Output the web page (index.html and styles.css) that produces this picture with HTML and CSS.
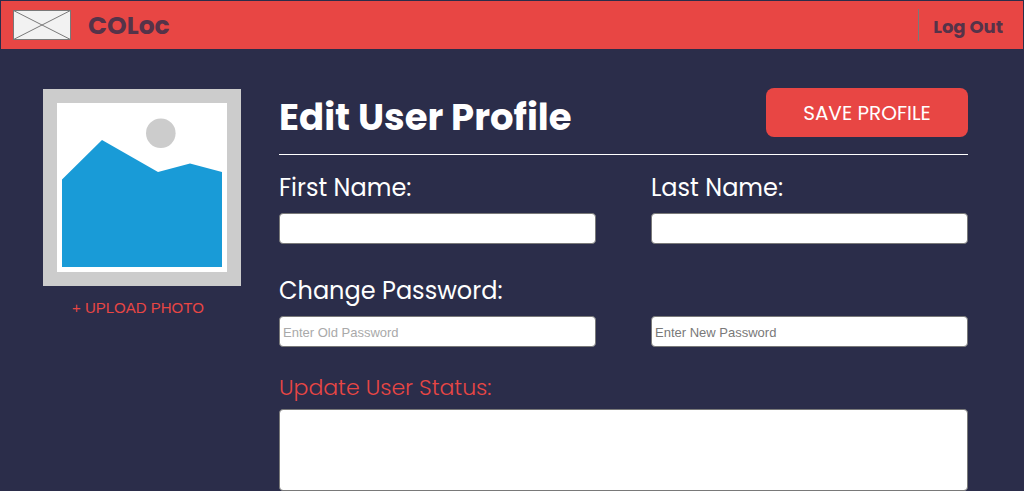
FILE: index.html
```html
<!DOCTYPE html>
<html lang="en">
<head>
<meta charset="utf-8">
<meta name="viewport" content="width=device-width, initial-scale=1">
<title>COLoc - Edit User Profile</title>
<link rel="stylesheet" href="styles.css">
</head>
<body>
<header class="topbar">
  <a class="brand" href="#">
    <svg class="brand-logo" viewBox="0 0 58 30" aria-hidden="true">
      <rect x="0.5" y="0.5" width="57" height="29" fill="#f2f2f2" stroke="#797979"/>
      <path d="M0.5 0.5L57.5 29.5M57.5 0.5L0.5 29.5" fill="none" stroke="#797979"/>
    </svg>
    <span class="brand-name">COLoc</span>
  </a>
  <a class="logout" href="#">Log Out</a>
</header>
<main class="page">
  <aside class="photo">
    <svg class="photo-image" viewBox="0 0 198 197" role="img" aria-label="Profile photo">
      <rect width="198" height="197" fill="#ccc"/>
      <rect x="14" y="14" width="170" height="169" fill="#fff"/>
      <circle cx="117.800" cy="44.300" r="14.800" fill="#ccc"/>
      <path d="M19 90.500L59 51l56 32 32-8.500L179 83v95H19z" fill="#199bd7"/>
    </svg>
    <button class="upload" type="button">+ UPLOAD PHOTO</button>
  </aside>
  <form class="profile">
    <div class="profile-head">
      <h1 class="title">Edit User Profile</h1>
      <button class="save" type="button">SAVE PROFILE</button>
    </div>
    <div class="fields">
      <div class="field">
        <label class="label" for="first">First Name:</label>
        <input class="input" id="first" type="text">
      </div>
      <div class="field">
        <label class="label" for="last">Last Name:</label>
        <input class="input" id="last" type="text">
      </div>
      <div class="field">
        <label class="label" for="old">Change Password:</label>
        <input class="input input-muted" id="old" type="password" placeholder="Enter Old Password">
      </div>
      <div class="field">
        <input class="input" id="new" type="password" placeholder="Enter New Password" aria-label="New password">
      </div>
    </div>
    <div class="field">
      <label class="label label-status" for="status">Update User Status:</label>
      <textarea class="input status" id="status"></textarea>
    </div>
  </form>
</main>
</body>
</html>
```
FILE: styles.css
```css
* {
  box-sizing: border-box;
}

body {
  margin: 0;
  background: #2b2d4a;
  color: #fff;
  font-family: Poppins, Inter, "Liberation Sans", sans-serif;
}

.topbar {
  display: flex;
  align-items: center;
  justify-content: space-between;
  height: 50px;
  padding: 0 20px 0 12px;
  border: 1px solid #2b2d4a;
  background: #e84644;
}

.brand {
  display: flex;
  align-items: center;
  gap: 17px;
  color: #553349;
  font-size: 25px;
  font-weight: 700;
  line-height: 34px;
  text-decoration: none;
}

.brand-name {
  padding-top: 2px;
}

.brand-logo {
  width: 58px;
  height: 30px;
}

.logout {
  padding: 3px 0 0 14px;
  border-left: 1px solid #797979;
  color: #553349;
  font-size: 18px;
  font-weight: 700;
  line-height: 29px;
  text-decoration: none;
}

.page {
  display: grid;
  grid-template-columns: 198px 1fr;
  column-gap: 38px;
  padding: 38px 56px 0 43px;
}

.photo {
  padding-top: 1px;
}

.photo-image {
  display: block;
  width: 100%;
}

.upload {
  display: block;
  margin: 12px 0 0 29px;
  padding: 0;
  border: 0;
  background: none;
  color: #e84644;
  font: 15px/20px "Liberation Sans", sans-serif;
}

.profile-head {
  display: flex;
  align-items: flex-start;
  justify-content: space-between;
  padding-bottom: 8px;
  border-bottom: 1px solid #fff;
}

.title {
  margin: 0;
  font-size: 37px;
  font-weight: 700;
  line-height: 58px;
}

.save {
  width: 202px;
  height: 49px;
  padding: 0;
  border: 0;
  border-radius: 8px;
  background: #e84644;
  color: #fff;
  font-family: inherit;
  font-size: 20px;
}

.fields {
  display: grid;
  grid-template-columns: 1fr 1fr;
  gap: 26px 55px;
  padding: 12px 0 20px;
}

.field {
  display: flex;
  flex-direction: column;
  justify-content: flex-end;
}

.label {
  margin-bottom: 5px;
  font-size: 24px;
  line-height: 41px;
}

.label-status {
  margin-bottom: 0;
  color: #e84644;
  font-size: 22px;
  font-weight: 300;
  line-height: 42px;
}

.input {
  width: 100%;
  height: 31px;
  padding: 4px 3px 2px;
  border: 1px solid #797979;
  border-radius: 4px;
  background: #fff;
  color: #333;
  font: 13px "Liberation Sans", sans-serif;
}

.input::placeholder {
  color: #797979;
}

.input-muted::placeholder {
  color: #a9a9a9;
}

.status {
  display: block;
  height: 82px;
  resize: none;
}
```
